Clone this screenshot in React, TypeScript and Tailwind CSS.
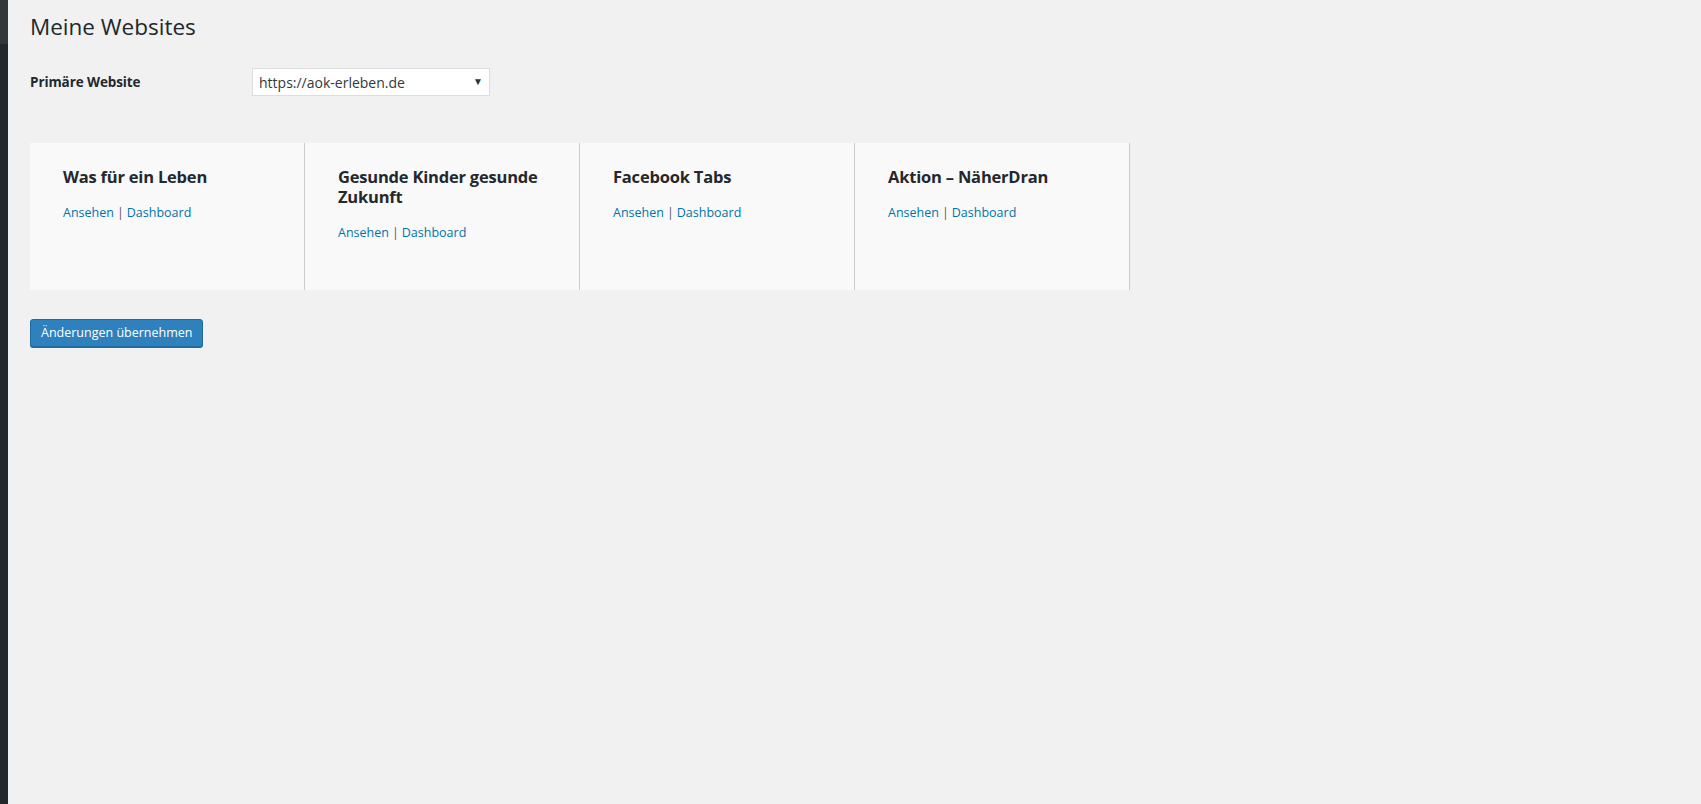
const sites = [
  { name: "Was für ein Leben" },
  { name: "Gesunde Kinder gesunde Zukunft" },
  { name: "Facebook Tabs" },
  { name: "Aktion – NäherDran" },
];

function SiteCard({ name }: { name: string }) {
  return (
    <li className="w-[275px] bg-[#f9f9f9] border-r border-[#cccccc] pl-[33px] pr-[30px] pt-6 pb-[48px]">
      <h3 className="text-[16.5px] leading-[20px] font-bold text-[#23282d] tracking-[-0.2px]">{name}</h3>
      <p className="mt-[17px] text-[12.5px] leading-[18px] text-[#555]">
        <a href="#" className="text-[#0073aa]">Ansehen</a>
        <span className="mx-[3px]">|</span>
        <a href="#" className="text-[#0073aa]">Dashboard</a>
      </p>
    </li>
  );
}

export default function App() {
  return (
    <div
      className="flex min-h-screen w-full"
      style={{ fontFamily: '"Open Sans", "Noto Sans", sans-serif' }}
    >
      <aside className="w-[8px] shrink-0 bg-[#23282d] flex flex-col">
        <div className="h-[44px] bg-[#32373c]" />
      </aside>

      <main className="flex-1 bg-[#f1f1f1] pl-[22px] pt-[12px]">
        <h1 className="text-[22.5px] leading-[29px] font-normal text-[#23282d]">Meine Websites</h1>

        <div className="mt-[27px] flex items-center">
          <label className="w-[222px] text-[13.5px] font-bold text-[#23282d] tracking-[-0.1px]">Primäre Website</label>
          <div className="relative w-[238px] h-[28px] bg-white border border-[#dddddd] flex items-center pl-[6px]">
            <span className="text-[14px] text-[#32373c]">https://aok-erleben.de</span>
            <span className="absolute right-[6px] top-[5px] text-[10px] text-[#333]">▼</span>
          </div>
        </div>

        <ul className="mt-[47px] flex items-stretch">
          {sites.map((s) => (
            <SiteCard key={s.name} name={s.name} />
          ))}
        </ul>

        <button className="mt-[29px] h-[28px] px-[10px] bg-[#2e81bc] border border-[#1f6ca3] rounded-[3px] text-[12.5px] text-white shadow-[0_1px_0_#1f6ca3]">
          Änderungen übernehmen
        </button>
      </main>
    </div>
  );
}
